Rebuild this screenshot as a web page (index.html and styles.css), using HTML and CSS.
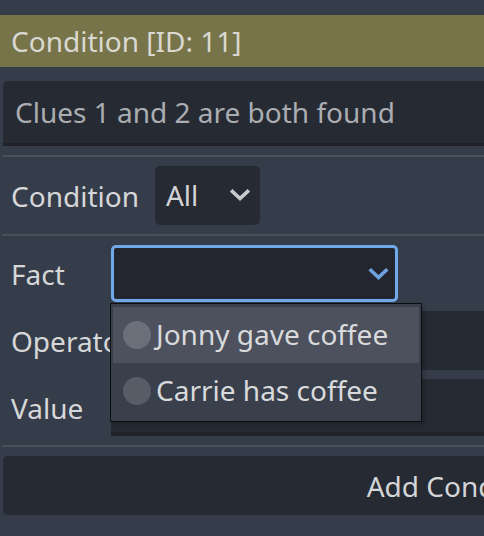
FILE: index.html
```html
<!DOCTYPE html>
<html>
<head>
<meta charset="utf-8">
<link rel="stylesheet" href="styles.css">
</head>
<body>
<div class="panel">
  <div class="title">Condition [ID: 11]</div>
  <div class="textfield">Clues 1 and 2 are both found</div>
  <div class="sep"></div>
  <div class="cond-row">
    <span class="label">Condition</span>
    <div class="option small">
      <span class="opt-text">All</span>
      <svg class="chev" viewBox="0 0 20 12" width="20" height="12"><polyline points="2.5,2.5 10,9.5 17.5,2.5" fill="none" stroke="#c9cacc" stroke-width="3.6" stroke-linejoin="miter" stroke-linecap="square"/></svg>
    </div>
  </div>
  <div class="sep"></div>
  <div class="grid">
    <span class="label">Fact</span>
    <div class="option fact">
      <span class="opt-text"></span>
      <svg class="chev" viewBox="0 0 20 12" width="21" height="12"><polyline points="2.5,2.5 10,9.5 17.5,2.5" fill="none" stroke="#6ea3dd" stroke-width="3.6" stroke-linejoin="miter" stroke-linecap="square"/></svg>
    </div>
    <span class="label">Operator</span>
    <div class="option wide"></div>
    <span class="label">Value</span>
    <div class="field"></div>
  </div>
  <div class="sep"></div>
  <div class="add">Add Condition</div>

  <div class="popup">
    <div class="item hover"><span class="radio"></span><span class="item-text">Jonny gave coffee</span></div>
    <div class="item"><span class="radio"></span><span class="item-text">Carrie has coffee</span></div>
  </div>
</div>
</body>
</html>
```

FILE: styles.css
```css
html, body {
  margin: 0;
  padding: 0;
  background: #363d4a;
  overflow: hidden;
  width: 484px;
  height: 536px;
}
.panel {
  position: relative;
  width: 921px;
  padding-top: 15px;
  display: flex;
  flex-direction: column;
  font-family: "Noto Sans", "Open Sans", sans-serif;
  font-size: 28px;
  line-height: 38px;
  color: #d7d8da;
}
.title {
  height: 52px;
  background: #77744a;
  padding-left: 11px;
  display: flex;
  align-items: center;
  color: #d9d9d2;
}
.textfield {
  margin: 14px 3px 0 3px;
  background: #262a33;
  border-bottom: 3px solid #1f2229;
  border-radius: 5px 5px 0 0;
  padding: 12px 12px 12px 12px;
  color: #aaadb2;
}
.sep {
  height: 2px;
  background: #4a505b;
  margin: 9px 3px 0 2px;
}
.cond-row {
  margin-top: 9px;
  height: 59px;
  display: flex;
  align-items: center;
  padding-left: 11px;
  gap: 16px;
}
.label {
  color: #d6d7d9;
  white-space: nowrap;
}
.option {
  background: #262a33;
  border-radius: 5px;
  display: flex;
  align-items: center;
  justify-content: space-between;
  box-sizing: border-box;
}
.option.small {
  width: 105px;
  height: 59px;
  padding: 0 10px 2px 11px;
  color: #d3d4d6;
}
.grid {
  margin-top: 9px;
  display: grid;
  grid-template-columns: 111px 1fr;
  grid-template-rows: 57px 59px 57px;
  row-gap: 9px;
  margin-right: 3px;
}
.grid .label {
  padding-left: 11px;
  align-self: center;
  overflow: hidden;
}
.option.fact {
  width: 287px;
  height: 57px;
  border: 3px solid #70a9ea;
  background: #23262e;
  padding: 0 6px 0 10px;
}
.option.wide {
  height: 59px;
  border-radius: 5px;
}
.field {
  background: #262a33;
  border-bottom: 4px solid #1f2229;
  border-radius: 5px 5px 0 0;
}
.add {
  margin: 9px 3px 0 3px;
  height: 59px;
  background: #262a33;
  border-radius: 5px;
  display: flex;
  align-items: center;
  justify-content: center;
  color: #d4d5d7;
}
.popup {
  position: absolute;
  left: 110px;
  top: 303px;
  width: 312px;
  height: 119px;
  box-sizing: border-box;
  border: 1px solid #0c0d10;
  background: #393f4b;
  padding: 3px 2px 2px 2px;
  box-shadow: 3px 3px 4px rgba(0, 0, 0, 0.18);
}
.item {
  height: 56px;
  display: flex;
  align-items: center;
  padding-left: 10px;
  gap: 5px;
  color: #d9dadc;
}
.item.hover {
  background: #4c515d;
}
.radio {
  width: 28px;
  height: 28px;
  border-radius: 50%;
  background: #575c66;
  flex: none;
}
.item.hover .radio {
  background: #6b6f79;
}
.item-text {
  padding-bottom: 2px;
}
```
